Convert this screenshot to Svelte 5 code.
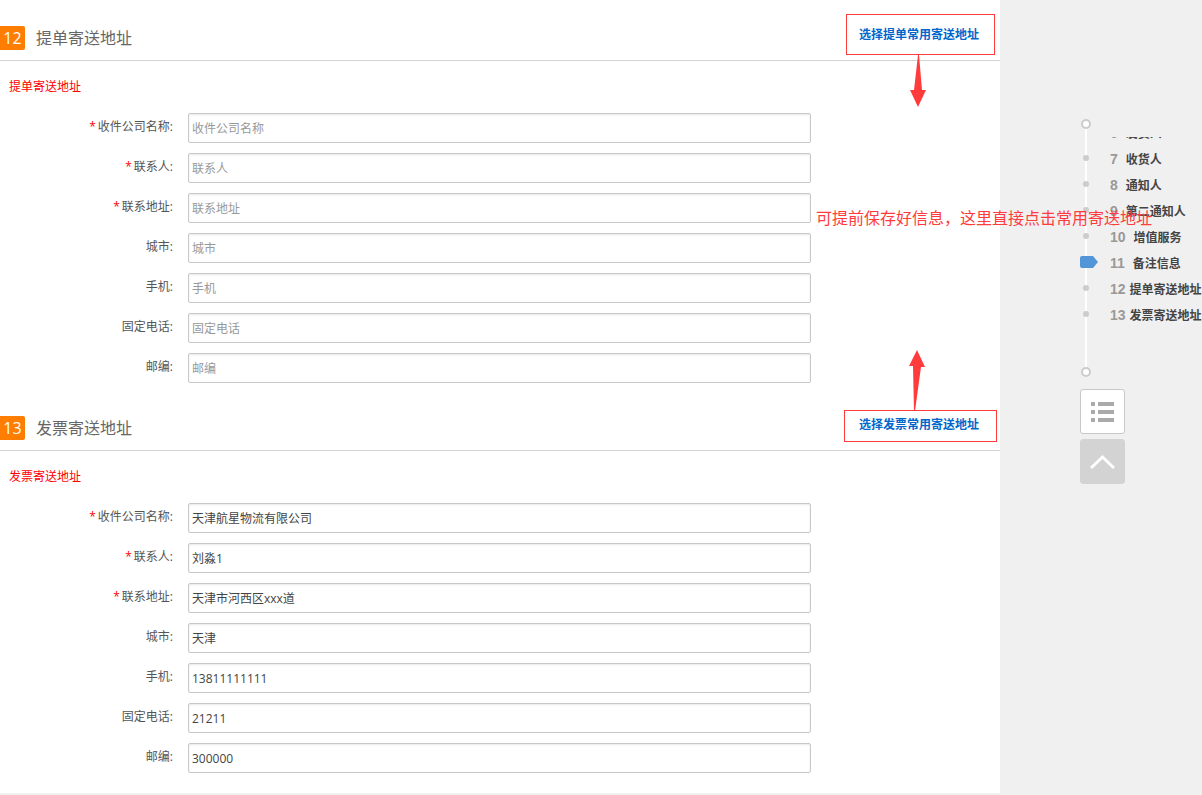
<script>
  const fields = [
    { key: 'company', label: '收件公司名称', required: true },
    { key: 'contact', label: '联系人', required: true },
    { key: 'address', label: '联系地址', required: true },
    { key: 'city', label: '城市' },
    { key: 'mobile', label: '手机' },
    { key: 'phone', label: '固定电话' },
    { key: 'zip', label: '邮编' }
  ]

  let sections = $state([
    {
      no: 12,
      id: 'bill',
      title: '提单寄送地址',
      pick: '选择提单常用寄送地址',
      values: { company: '', contact: '', address: '', city: '', mobile: '', phone: '', zip: '' }
    },
    {
      no: 13,
      id: 'invoice',
      title: '发票寄送地址',
      pick: '选择发票常用寄送地址',
      values: {
        company: '天津航星物流有限公司',
        contact: '刘淼1',
        address: '天津市河西区xxx道',
        city: '天津',
        mobile: '13811111111',
        phone: '21211',
        zip: '300000'
      }
    }
  ])

  const steps = [
    { no: 6, name: '发货人' },
    { no: 7, name: '收货人' },
    { no: 8, name: '通知人' },
    { no: 9, name: '第二通知人' },
    { no: 10, name: '增值服务' },
    { no: 11, name: '备注信息' },
    { no: 12, name: '提单寄送地址', sub: true },
    { no: 13, name: '发票寄送地址', sub: true }
  ]
  const current = 11
</script>

<div class="page">
  <main>
    {#each sections as section (section.id)}
      <section id={section.id}>
        <header>
          <span class="badge">{section.no}</span>
          <h2>{section.title}</h2>
          <a class="pick" href="#{section.id}">{section.pick}</a>
          {#if section.id === 'bill'}
            <svg class="mark" width="160" height="110" viewBox="0 0 160 110" aria-hidden="true">
              <rect x="6.5" y="14.5" width="148" height="40" />
              <path d="M78 55h1l3 35h4l-8 17-8-17h4z" />
            </svg>
          {:else}
            <svg class="mark" width="160" height="60" viewBox="0 0 160 60" aria-hidden="true">
              <rect x="4.5" y="20.5" width="152" height="31" />
              <path d="M74 21h1l6-44h4l-8-17-8 16h4z" />
            </svg>
          {/if}
        </header>
        <h3>{section.title}</h3>
        <form>
          {#each fields as field}
            <div class="row">
              <label for="{section.id}-{field.key}">
                {#if field.required}<i>*</i>{/if}{field.label}:
              </label>
              <input
                id="{section.id}-{field.key}"
                type="text"
                placeholder={field.label}
                bind:value={section.values[field.key]}
              />
            </div>
          {/each}
        </form>
      </section>
    {/each}
    <p class="note">可提前保存好信息&#65292;这里直接点击常用寄送地址</p>
  </main>

  <aside>
    <nav>
      <span class="ring"></span>
      <ul>
        {#each steps as step}
          <li>
            <span class="stop">
              {#if step.no === current}
                <svg width="18" height="12" viewBox="0 0 18 12" aria-hidden="true">
                  <path d="M2 0h11l5 6-5 6H2a2 2 0 0 1-2-2V2a2 2 0 0 1 2-2z" fill="#5395d6" />
                </svg>
              {:else}
                <span class="dot"></span>
              {/if}
            </span>
            <a href="#step{step.no}" class:sub={step.sub}><b>{step.no}</b>{step.name}</a>
          </li>
        {/each}
      </ul>
      <span class="ring"></span>
    </nav>
    <button class="list" aria-label="目录">
      <svg width="23" height="22" viewBox="0 0 23 22" fill="#aaa" aria-hidden="true">
        <path d="M0 1h4v4H0zM7 1h16v4H7zM0 9h4v4H0zM7 9h16v4H7zM0 17h4v4H0zM7 17h16v4H7z" />
      </svg>
    </button>
    <button class="top" aria-label="返回顶部">
      <svg width="25" height="16" viewBox="0 0 25 16" aria-hidden="true">
        <path d="M1 14 12.5 3 24 14" fill="none" stroke="#fff" stroke-width="3" />
      </svg>
    </button>
  </aside>
</div>

<style>
  :global(body) {
    margin: 0;
    background: #f0f0f0;
    overflow-x: hidden;
  }

  .page {
    display: grid;
    grid-template-columns: minmax(0, 1fr) 202px;
    align-items: start;
    font-family: 'Open Sans', 'Noto Sans CJK SC', sans-serif;
    font-size: 12px;
    color: #555;
  }

  main {
    position: relative;
    background: #fff;
    padding-bottom: 13px;
  }
  section {
    padding-bottom: 7px;
  }
  header {
    position: relative;
    display: flex;
    align-items: center;
    height: 44px;
    padding: 16px 21px 0 0;
    border-bottom: 1px solid #d4d4d0;
  }
  .badge {
    width: 25px;
    height: 24px;
    border-radius: 0 2px 2px 0;
    background: #ff7d00;
    color: #fff;
    font-size: 16px;
    line-height: 24px;
    text-align: center;
  }
  h2 {
    margin: 0 auto 0 11px;
    font-size: 16px;
    font-weight: 400;
    line-height: 24px;
    color: #666;
  }
  .pick {
    margin-bottom: 6px;
    color: #06c;
    font-weight: 700;
    line-height: 20px;
    text-decoration: none;
  }
  .mark {
    position: absolute;
    top: 0;
    right: 0;
    overflow: visible;
    pointer-events: none;
  }
  .mark rect {
    fill: none;
    stroke: #ff3b3b;
  }
  .mark path {
    fill: #ff3b3b;
  }

  h3 {
    margin: 0;
    padding: 16px 0 16px 9px;
    font-size: 12px;
    font-weight: 400;
    line-height: 20px;
    color: #f00;
  }
  form {
    display: grid;
    gap: 10px;
  }
  .row {
    display: grid;
    grid-template-columns: 173px minmax(0, 1fr);
    column-gap: 15px;
    padding-right: 189px;
  }
  label {
    line-height: 28px;
    text-align: right;
  }
  label i {
    margin-right: 2px;
    color: #f00;
    font-style: normal;
  }
  input {
    box-sizing: border-box;
    width: 100%;
    height: 30px;
    padding: 0 3px;
    border: 1px solid #c8c8c8;
    border-radius: 2px;
    box-shadow: inset 0 1px 2px #e8e8e8;
    background: #fff;
    color: #444;
    font: inherit;
  }
  input::placeholder {
    color: #999;
  }

  .note {
    position: absolute;
    top: 205px;
    left: calc(100% - 184px);
    z-index: 1;
    margin: 0;
    color: #ff3b3b;
    font-family: 'Noto Sans CJK SC', sans-serif;
    font-size: 16px;
    line-height: 24px;
    white-space: nowrap;
  }

  aside {
    display: flex;
    flex-direction: column;
    align-items: flex-start;
    gap: 5px;
    padding: 119px 0 0 80px;
  }
  nav {
    position: relative;
    width: 100%;
    margin-bottom: 7px;
  }
  nav::before {
    content: '';
    position: absolute;
    top: 10px;
    bottom: 10px;
    left: 5px;
    width: 2px;
    background: #fff;
  }
  .ring {
    display: block;
    box-sizing: border-box;
    width: 10px;
    height: 10px;
    margin-left: 1px;
    border: 2px solid #ccc;
    border-radius: 50%;
    background: #fff;
  }
  ul {
    position: relative;
    min-height: 230px;
    margin: 8px 0 0;
    padding: 0;
    list-style: none;
    overflow: hidden;
  }
  li {
    display: flex;
    align-items: center;
    height: 26px;
  }
  li:first-child {
    margin-top: -16px;
  }
  .stop {
    flex: none;
    display: flex;
    width: 30px;
    padding-bottom: 4px;
  }
  .dot {
    width: 6px;
    height: 6px;
    margin-left: 3px;
    border-radius: 50%;
    background: #ccc;
  }
  li a {
    display: flex;
    gap: 8px;
    color: #444;
    font-weight: 700;
    line-height: 26px;
    text-decoration: none;
    white-space: nowrap;
  }
  li a.sub {
    gap: 4px;
  }
  li b {
    color: #999;
    font-family: 'Liberation Sans', Arial, sans-serif;
    font-size: 14px;
    line-height: 24px;
  }

  button {
    display: grid;
    place-items: center;
    width: 45px;
    height: 45px;
    padding: 0;
    border: 1px solid #c8c8c8;
    border-radius: 3px;
    background: #fff;
    cursor: pointer;
  }
  .top {
    border-color: #d3d3d3;
    background: #d3d3d3;
  }
</style>
